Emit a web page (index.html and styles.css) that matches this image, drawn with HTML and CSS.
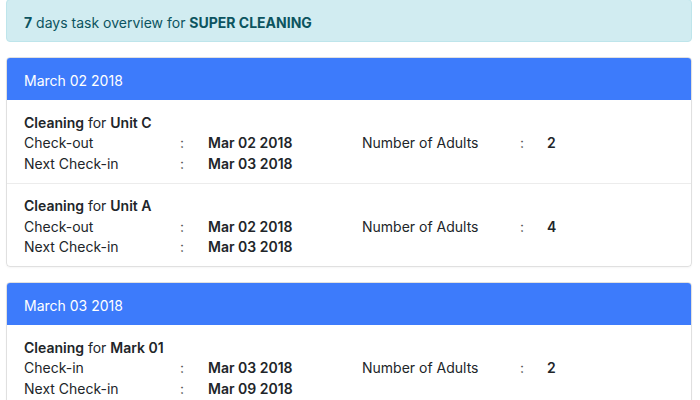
FILE: index.html
```html
<!DOCTYPE html>
<html>
<head>
<meta charset="utf-8">
<link rel="stylesheet" href="styles.css">
</head>
<body>
<div class="page">
  <div class="alert"><b>7</b> days task overview for <b>SUPER CLEANING</b></div>

  <div class="card">
    <div class="card-header">March 02 2018</div>
    <div class="task">
      <div class="task-title"><b>Cleaning</b> for <b>Unit C</b></div>
      <div class="grid">
        <span>Check-out</span><span class="colon">:</span><b>Mar 02 2018</b>
        <span>Number of Adults</span><span class="colon">:</span><b>2</b>
        <span>Next Check-in</span><span class="colon">:</span><b>Mar 03 2018</b>
      </div>
    </div>
    <div class="task">
      <div class="task-title"><b>Cleaning</b> for <b>Unit A</b></div>
      <div class="grid">
        <span>Check-out</span><span class="colon">:</span><b>Mar 02 2018</b>
        <span>Number of Adults</span><span class="colon">:</span><b>4</b>
        <span>Next Check-in</span><span class="colon">:</span><b>Mar 03 2018</b>
      </div>
    </div>
  </div>

  <div class="card">
    <div class="card-header">March 03 2018</div>
    <div class="task">
      <div class="task-title"><b>Cleaning</b> for <b>Mark 01</b></div>
      <div class="grid">
        <span>Check-in</span><span class="colon">:</span><b>Mar 03 2018</b>
        <span>Number of Adults</span><span class="colon">:</span><b>2</b>
        <span>Next Check-in</span><span class="colon">:</span><b>Mar 09 2018</b>
      </div>
    </div>
  </div>
</div>
</body>
</html>
```

FILE: styles.css
```css
* { box-sizing: border-box; }
body {
  margin: 0;
  background: #ffffff;
  font-family: Inter, "Liberation Sans", sans-serif;
  font-size: 14px;
  line-height: 20.5px;
  color: #212529;
}
b { font-weight: 600; }
.page {
  padding: 0 8px 0 6px;
  display: flex;
  flex-direction: column;
  gap: 15px;
}
.alert {
  height: 43px;
  margin-top: -1px;
  padding: 13px 17px 9px;
  background: #d1ecf1;
  border: 1px solid #bee5eb;
  border-radius: 4px;
  color: #0c5460;
}
.alert b { font-weight: 700; }
.card {
  border: 1px solid rgba(0,0,0,0.12);
  border-radius: 4px;
  overflow: hidden;
  box-shadow: 0 1px 2px rgba(0,0,0,0.04);
}
.card:first-of-type { margin-top: -1px; }
.card-header {
  background: #3d7bfb;
  color: #ffffff;
  padding: 13px 17px 8.5px;
  height: 42px;
}
.task {
  padding: 12.5px 17px 8.5px;
}
.task + .task { border-top: 1px solid #ececec; }
.grid {
  display: grid;
  grid-template-columns: 156px 28px 154px 158px 27px 1fr;
}
.grid > :nth-child(4) { grid-column: 4; grid-row: 1; }
.grid > :nth-child(5) { grid-column: 5; grid-row: 1; }
.grid > :nth-child(6) { grid-column: 6; grid-row: 1; }
.grid > :nth-child(7) { grid-column: 1; grid-row: 2; }
.grid > :nth-child(8) { grid-column: 2; grid-row: 2; }
.grid > :nth-child(9) { grid-column: 3; grid-row: 2; }
.colon { color: #555; }
```
